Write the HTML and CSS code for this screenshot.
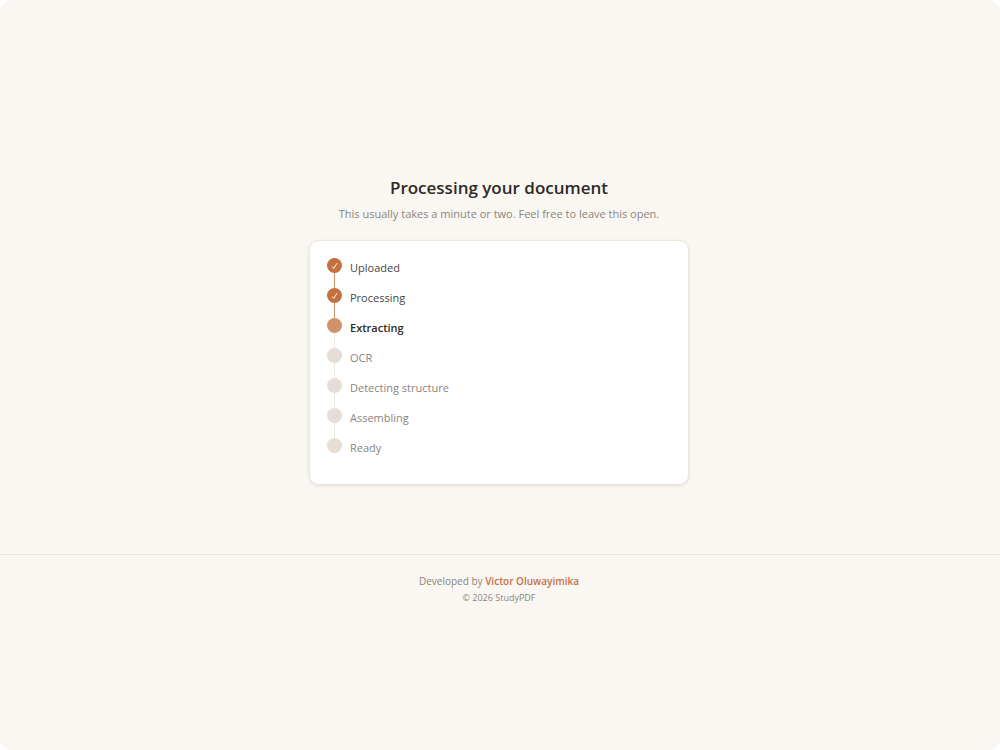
FILE: index.html
```html
<!DOCTYPE html>
<html lang="en">
<head>
    <meta charset="UTF-8">
    <meta name="viewport" content="width=device-width, initial-scale=1.0">
    <title>StudyPDF</title>
    <link rel="stylesheet" href="styles.css">
</head>
<body>
    <div class="page">
        <main class="main">
            <h1 class="title">Processing your document</h1>
            <p class="subtitle">This usually takes a minute or two. Feel free to leave this open.</p>

            <div class="card">
                <ol class="steps">
                    <li class="step done">
                        <span class="dot"><svg class="check" viewBox="0 0 8 8" aria-hidden="true"><path d="M1.2 4.6 L2.8 6.4 L6 1.2"/></svg></span>
                        <span class="label">Uploaded</span>
                    </li>
                    <li class="step done">
                        <span class="dot"><svg class="check" viewBox="0 0 8 8" aria-hidden="true"><path d="M1.2 4.6 L2.8 6.4 L6 1.2"/></svg></span>
                        <span class="label">Processing</span>
                    </li>
                    <li class="step active">
                        <span class="dot"></span>
                        <span class="label">Extracting</span>
                    </li>
                    <li class="step">
                        <span class="dot"></span>
                        <span class="label">OCR</span>
                    </li>
                    <li class="step">
                        <span class="dot"></span>
                        <span class="label">Detecting structure</span>
                    </li>
                    <li class="step">
                        <span class="dot"></span>
                        <span class="label">Assembling</span>
                    </li>
                    <li class="step">
                        <span class="dot"></span>
                        <span class="label">Ready</span>
                    </li>
                </ol>
            </div>
        </main>

        <footer class="footer">
            <p class="credit">Developed by <a href="#">Victor Oluwayimika</a></p>
            <p class="copyright">© 2026 StudyPDF</p>
        </footer>
    </div>
</body>
</html>
```

FILE: styles.css
```css
* {
    box-sizing: border-box;
}
html {
    background: #ffffff;
}
body {
    margin: 0;
    font-family: "Open Sans", "Noto Sans", sans-serif;
    font-size: 11px;
    line-height: 16px;
    color: #2d2a26;
}
h1, p, ol {
    margin: 0;
    padding: 0;
}
.page {
    min-height: 100vh;
    background: #faf7f2;
    border-radius: 12px;
}
.main {
    display: flex;
    flex-direction: column;
    align-items: center;
    padding: 176px 18px 69px 16px;
}
.title {
    font-size: 17px;
    line-height: 24px;
    font-weight: 600;
}
.subtitle {
    margin-top: 6px;
    color: #8a857c;
}
.card {
    width: 100%;
    max-width: 380px;
    margin-top: 18px;
    padding: 17px 17px 16px;
    background: #ffffff;
    border: 1px solid #ece6dd;
    border-radius: 10px;
    box-shadow: 0 1px 3px rgba(45, 42, 38, 0.12);
}
.steps {
    list-style: none;
}
.step {
    display: flex;
    gap: 8px;
    height: 30px;
    color: #8a857c;
    /* connector running down behind the dots */
    background: linear-gradient(#ece6dd, #ece6dd) 7px 0 / 1px 100% no-repeat;
}
.step:last-child {
    background: none;
}
.dot {
    display: flex;
    align-items: center;
    justify-content: center;
    width: 15px;
    height: 15px;
    border-radius: 50%;
    background: #e6ddd4;
}
.label {
    padding-top: 2px;
}
.done {
    color: #4a4640;
    background-image: linear-gradient(#d4916a, #d4916a);
}
.done .dot {
    background: #c4703f;
}
.active {
    color: #2d2a26;
    font-weight: 600;
}
.active .dot {
    background: #d0916b;
}
.check {
    width: 8px;
    height: 8px;
    fill: none;
    stroke: #ffffff;
    stroke-width: 1;
}
.footer {
    padding: 18px 18px 24px 16px;
    border-top: 1px solid #ece6dd;
    text-align: center;
    color: #8a857c;
}
.credit {
    font-size: 10px;
}
.credit a {
    color: #c4703f;
    font-weight: 600;
    text-decoration: none;
}
.copyright {
    margin-top: 1px;
    font-size: 9px;
}
```
